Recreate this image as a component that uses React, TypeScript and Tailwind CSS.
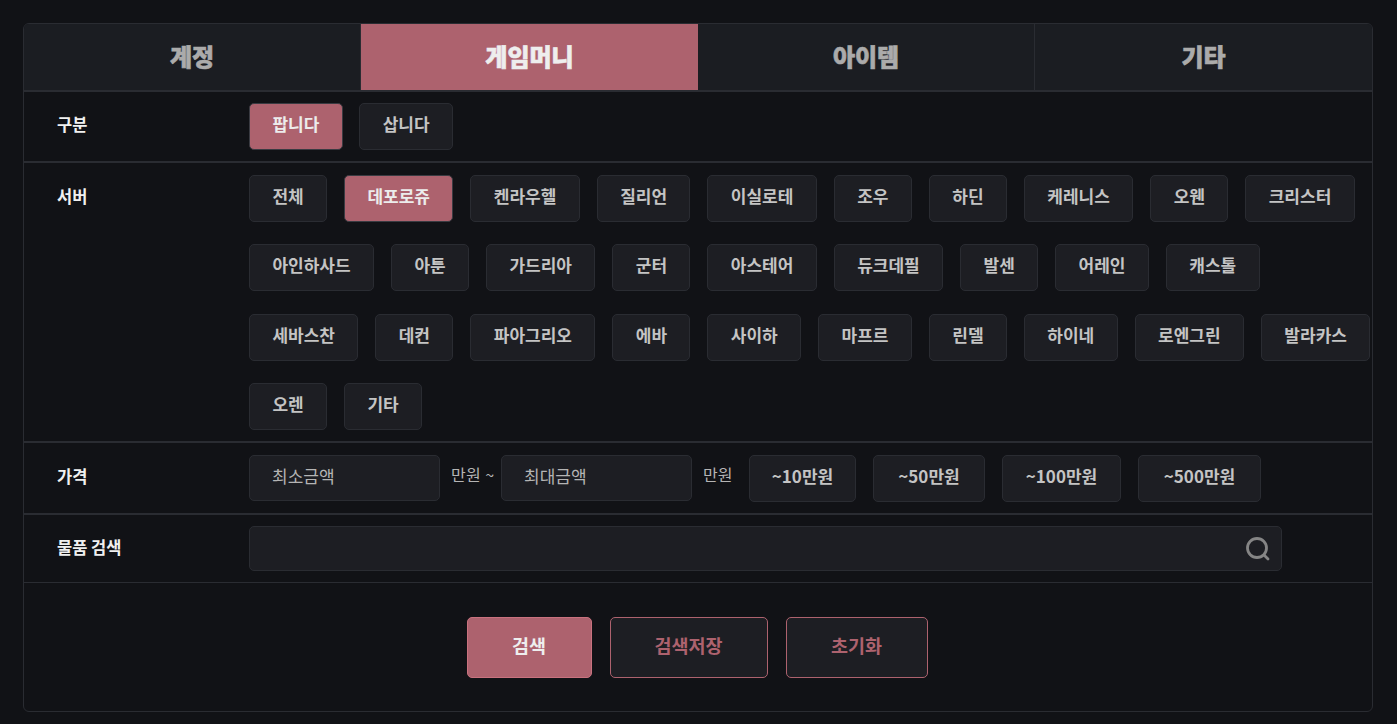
const F = '[font-family:"Noto_Sans_CJK_KR","Noto_Sans",sans-serif]';

const servers = [
  "전체","데포로쥬","켄라우헬","질리언","이실로테","조우","하딘","케레니스","오웬","크리스터",
  "아인하사드","아툰","가드리아","군터","아스테어","듀크데필","발센","어레인","캐스톨",
  "세바스찬","데컨","파아그리오","에바","사이하","마프르","린델","하이네","로엔그린","발라카스",
  "오렌","기타",
];

function Chip({ label, active, width }: { label: string; active?: boolean; width?: string }) {
  return (
    <button
      className={
        (active
          ? "h-[47px] whitespace-nowrap rounded-[5px] border border-[#3a3b42] bg-[#ad626e] text-[17px] font-bold leading-[40px] text-[#ececec] flex items-start justify-center "
          : "h-[47px] whitespace-nowrap rounded-[5px] border border-[#2a2c32] bg-[#1d1e23] text-[17px] font-bold leading-[40px] text-[#c4c4c4] flex items-start justify-center ") +
        (width ?? "px-[22.4px]")
      }
    >
      {label}
    </button>
  );
}

function Tab({ label, active }: { label: string; active?: boolean }) {
  return (
    <div
      className={
        active
          ? "flex items-center justify-center bg-[#ad626e] pb-[3px] text-[24px] font-black text-[#eeeeee] [-webkit-text-stroke:0.6px_#eeeeee]"
          : "flex items-center justify-center border-r border-[#2a2c32] bg-[#1b1d22] pb-[3px] text-[24px] font-black text-[#ababab] [-webkit-text-stroke:0.6px_#ababab] last:border-r-0"
      }
    >
      {label}
    </div>
  );
}

function Label({ children }: { children: string }) {
  return <div className="w-[225px] shrink-0 pl-[33px] text-[16.5px] font-bold leading-[24px] text-[#f0f0f0]">{children}</div>;
}

function PriceInput({ placeholder }: { placeholder: string }) {
  return (
    <div className="h-[46px] w-[191px] rounded-[5px] border border-[#2a2c32] bg-[#1d1e23] pl-[22px] text-[17px] leading-[39px] text-[#b4b4b4]">
      {placeholder}
    </div>
  );
}

export default function App() {
  return (
    <div className={`${F} min-h-[724px] bg-[#111216] pl-[23px] pt-[23px]`}>
      <div className="h-[689px] w-[1350px] overflow-hidden rounded-[6px] border border-[#2a2c32] bg-[#111216]">
        <div className="grid h-[68px] grid-cols-4 border-b-2 border-[#2a2c32]">
          <Tab label="계정" />
          <Tab label="게임머니" active />
          <Tab label="아이템" />
          <Tab label="기타" />
        </div>

        <div className="flex h-[71px] border-b-2 border-[#2a2c32] pt-[11px]">
          <div className="pt-[9px]"><Label>구분</Label></div>
          <div className="flex gap-x-[16.6px]">
            <Chip label="팝니다" active />
            <Chip label="삽니다" />
          </div>
        </div>

        <div className="flex h-[280px] border-b-2 border-[#2a2c32] pt-[12px]">
          <div className="pt-[9px]"><Label>서버</Label></div>
          <div className="flex flex-1 flex-wrap content-start gap-x-[17px] gap-y-[22.4px]">
            {servers.map((s) => (
              <Chip key={s} label={s} active={s === "데포로쥬"} />
            ))}
          </div>
        </div>

        <div className="flex h-[72px] border-b-2 border-[#2a2c32] pt-[12px]">
          <div className="pt-[9px]"><Label>가격</Label></div>
          <PriceInput placeholder="최소금액" />
          <span className="ml-[11px] w-[50px] whitespace-nowrap text-[16px] leading-[39px] tracking-[0.4px] text-[#b4b4b4]">만원 ~</span>
          <PriceInput placeholder="최대금액" />
          <span className="ml-[11px] w-[46px] text-[16px] leading-[39px] text-[#b4b4b4]">만원</span>
          <div className="flex gap-x-[17px]">
            <Chip label="~10만원" width="w-[107px]" />
            <Chip label="~50만원" width="w-[112px]" />
            <Chip label="~100만원" width="w-[119px]" />
            <Chip label="~500만원" width="w-[123px]" />
          </div>
        </div>

        <div className="flex h-[68px] border-b border-[#2a2c32] pt-[11px]">
          <div className="pt-[9px]"><Label>물품 검색</Label></div>
          <div className="flex h-[45px] w-[1033px] items-center justify-end rounded-[5px] border border-[#2a2c32] bg-[#1d1e23] pr-[10px]">
            <svg width="26" height="26" viewBox="0 0 26 26" fill="none" stroke="#858585" strokeWidth="2.8" strokeLinecap="round">
              <circle cx="12" cy="12" r="9.5" />
              <path d="M19 19l4 4" />
            </svg>
          </div>
        </div>

        <div className="flex justify-center gap-x-[18px] pr-[2px] pt-[34px]">
          <button className="h-[61px] w-[125px] rounded-[5px] border border-[#c9727f] bg-[#ad626e] pb-[4px] text-[18.5px] font-bold text-[#eeeeee]">검색</button>
          <button className="h-[61px] w-[158px] rounded-[5px] border border-[#ad626e] bg-[#1d1e23] pb-[4px] text-[18.5px] font-bold text-[#ad626e]">검색저장</button>
          <button className="h-[61px] w-[142px] rounded-[5px] border border-[#ad626e] bg-[#1d1e23] pb-[4px] text-[18.5px] font-bold text-[#ad626e]">초기화</button>
        </div>
      </div>
    </div>
  );
}
